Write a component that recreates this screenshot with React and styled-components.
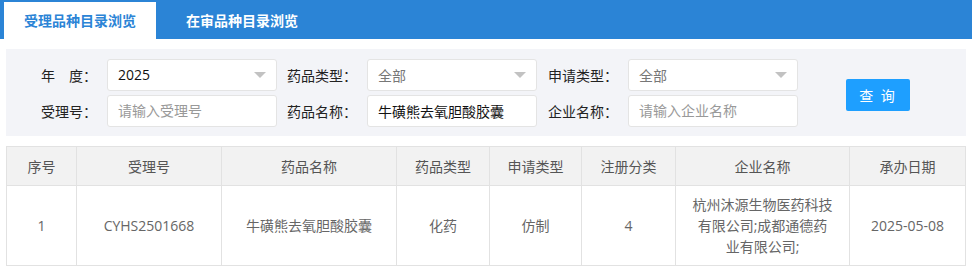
import React from "react";
import styled, { createGlobalStyle } from "styled-components";

const GlobalStyle = createGlobalStyle`
  * { box-sizing: border-box; }
  body {
    margin: 0;
    background: #fff;
    font-family: "Open Sans", "Noto Sans CJK SC", sans-serif;
    font-size: 14px;
    color: #333;
  }
`;

const columns = [
  { title: "序号", width: 70 },
  { title: "受理号", width: 145 },
  { title: "药品名称", width: 175 },
  { title: "药品类型", width: 93 },
  { title: "申请类型", width: 92 },
  { title: "注册分类", width: 94 },
  { title: "企业名称", width: 174 },
  { title: "承办日期", width: 116 },
];

const rows = [
  [
    "1",
    "CYHS2501668",
    "牛磺熊去氧胆酸胶囊",
    "化药",
    "仿制",
    "4",
    "杭州沐源生物医药科技有限公司;成都通德药业有限公司;",
    "2025-05-08",
  ],
];

function App() {
  return (
    <Page>
      <GlobalStyle />
      <TabBar>
        <Tab active>受理品种目录浏览</Tab>
        <Tab>在审品种目录浏览</Tab>
      </TabBar>

      <FilterPanel>
        <FieldGrid>
          <Label>年　度：</Label>
          <Select>
            <Value>2025</Value>
            <Arrow />
          </Select>
          <Label>药品类型：</Label>
          <Select>
            <Value muted>全部</Value>
            <Arrow />
          </Select>
          <Label>申请类型：</Label>
          <Select>
            <Value muted>全部</Value>
            <Arrow />
          </Select>

          <Label>受理号：</Label>
          <Input placeholder="请输入受理号" />
          <Label>药品名称：</Label>
          <Input defaultValue="牛磺熊去氧胆酸胶囊" />
          <Label>企业名称：</Label>
          <Input placeholder="请输入企业名称" />
        </FieldGrid>
        <SearchButton>查 询</SearchButton>
      </FilterPanel>

      <Table>
        <colgroup>
          {columns.map((c) => (
            <col key={c.title} style={{ width: c.width }} />
          ))}
        </colgroup>
        <thead>
          <tr>
            {columns.map((c) => (
              <Th key={c.title}>{c.title}</Th>
            ))}
          </tr>
        </thead>
        <tbody>
          {rows.map((r, i) => (
            <tr key={i}>
              {r.map((cell, j) => (
                <Td key={j}>{cell}</Td>
              ))}
            </tr>
          ))}
        </tbody>
      </Table>
    </Page>
  );
}

export default App;

const Page = styled.div`
  width: 972px;
`;

const TabBar = styled.div`
  display: flex;
  align-items: flex-end;
  height: 39px;
  padding-left: 4px;
  background: #2b84d6;
`;

const Tab = styled.div`
  height: 37px;
  line-height: 37px;
  padding: 0 ${(p) => (p.active ? "20px" : "30px")};
  font-size: 14px;
  font-weight: bold;
  color: ${(p) => (p.active ? "#2b84d6" : "#fff")};
  background: ${(p) => (p.active ? "#fff" : "transparent")};
`;

const FilterPanel = styled.div`
  display: flex;
  align-items: center;
  margin: 10px 6px 0;
  height: 87px;
  background: #f3f4f8;
`;

const FieldGrid = styled.div`
  display: grid;
  grid-template-columns: 101px 170px 90px 170px 91px 170px;
  grid-template-rows: 32px 32px;
  row-gap: 4px;
  align-items: center;
`;

const Label = styled.div`
  padding-right: 10px;
  text-align: right;
  color: #222;
  font-size: 14px;
  white-space: nowrap;
`;

const Select = styled.div`
  display: flex;
  align-items: center;
  height: 32px;
  padding: 0 10px;
  background: #fff;
  border: 1px solid #e4e4e4;
  border-radius: 3px;
`;

const Value = styled.span`
  color: ${(p) => (p.muted ? "#777" : "#111")};
  font-size: 14px;
`;

const Arrow = styled.span`
  margin-left: auto;
  width: 0;
  height: 0;
  border-left: 6px solid transparent;
  border-right: 6px solid transparent;
  border-top: 6px solid #c2c2c2;
`;

const Input = styled.input`
  height: 32px;
  width: 170px;
  padding: 0 10px;
  background: #fff;
  border: 1px solid #e4e4e4;
  border-radius: 3px;
  font-family: inherit;
  font-size: 14px;
  color: #111;
  outline: none;
  &::placeholder {
    color: #999;
  }
`;

const SearchButton = styled.button`
  margin-left: 48px;
  margin-top: 5px;
  width: 64px;
  height: 32px;
  border: none;
  border-radius: 2px;
  background: #1e9fff;
  color: #fff;
  font-family: inherit;
  font-size: 14px;
  letter-spacing: 2px;
`;

const Table = styled.table`
  margin: 10px 6px 0;
  width: 959px;
  table-layout: fixed;
  border-collapse: collapse;
  font-size: 14px;
`;

const Th = styled.th`
  height: 39px;
  padding: 0 10px;
  background: #f2f2f2;
  border: 1px solid #e2e2e2;
  color: #555;
  font-weight: normal;
  text-align: center;
`;

const Td = styled.td`
  height: 79px;
  padding: 8px 15px;
  border: 1px solid #e2e2e2;
  color: #666;
  line-height: 21px;
  text-align: center;
`;
